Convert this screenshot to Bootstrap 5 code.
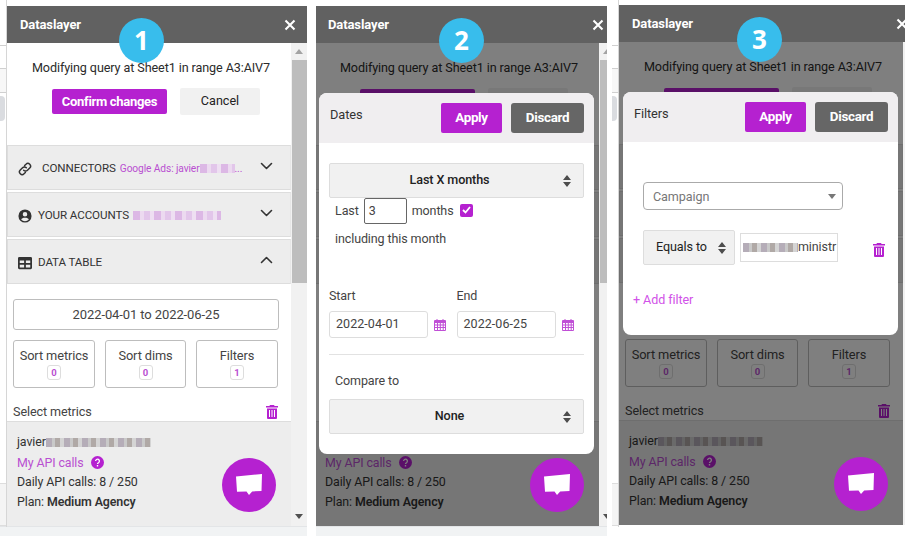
<!doctype html>
<html lang="en">
<head>
<meta charset="utf-8">
<title>Dataslayer</title>
<link href="https://cdn.jsdelivr.net/npm/bootstrap@5.3.0/dist/css/bootstrap.min.css" rel="stylesheet">
<style>
html,body{height:536px;overflow:hidden;background:#fff}
body{font-family:Roboto,"Liberation Sans",sans-serif;font-size:12.4px;color:#3c3c3c;letter-spacing:-.1px}
.stage{padding-top:6px;padding-left:7px;width:905px;height:536px;overflow:hidden;position:relative;gap:9px}
.under-bar{position:absolute;top:526px;height:10px;background:#f1f3f4;border-top:1px solid #e3e5e7}
.sheet-strip{position:absolute;top:0;height:527px;width:7px;border-right:1px solid #d6d6d6}
.sheet-strip i{position:absolute;left:0;right:0;display:block}
.strip-a{top:45px;height:24px;border-top:1px solid #d0d0d0;border-bottom:1px solid #d0d0d0}
.strip-b{top:69px;height:24px;background:#f7f7f7;border-bottom:1px solid #d0d0d0}
.strip-pill{top:96px;height:25px;background:#dadce0;border-radius:0 4px 4px 0;right:1px!important}
.strip-c{top:483px;height:43px;background:#f4f4f4;border-top:1px solid #ddd;border-bottom:1px solid #ddd}
.win{position:relative;height:520px;overflow:hidden;flex:none;z-index:1}
.w1{width:300px}
.w2{width:291px}
.w3{width:286px;margin-left:3px;margin-top:-1px}
.inner{width:300px}
.w2 .inner{margin-left:-1px}
.topbar{height:37px;background:#616161;color:#fff;font-weight:700;font-size:13px;padding:0 11px 0 13px;position:relative;z-index:3}
.xicon{width:12px;height:12px;flex:none}
.main{height:483px}
.content{width:284px;position:relative;overflow:hidden;flex:none}
.scrollzone{height:378px;overflow:hidden;background:#fff}
.scrollrail{width:16px;background:#f1f1f1;flex:none;position:relative}
.rail-up,.rail-down{position:absolute;left:4px;width:0;height:0;border-left:4px solid transparent;border-right:4px solid transparent}
.rail-up{top:6px;border-bottom:5px solid #a3a3a3}
.rail-down{bottom:7px;border-top:5px solid #505050}
.thumb{position:absolute;left:1px;right:0;top:17px;height:223px;background:#bdbdbd}
.msg{padding-top:17px;font-size:12.6px;color:#2b2b2b;height:102px}
.msg p{margin:0 0 12px;line-height:16px;padding-left:4px}
.btn-violet{background:#b521d0;color:#fff;border:0;border-radius:2px;font-weight:700;font-size:13px;padding:0;letter-spacing:-.3px}
.btn-cancel{background:#f1f1f1;color:#222;border:0;border-radius:2px;font-size:12.6px;padding:0;font-weight:400}
.confirm{width:115px;height:25px;margin-right:13px;margin-left:14px}
.cancelb{width:80px;height:27px}
.acc-item{height:45px;margin-bottom:2px;background:#ededed;border:1px solid #ddd;border-right-color:#e6e6e6;padding:3px 17px 0 10px;color:#333;font-size:11.6px;white-space:nowrap}
.acc-item svg.ico{width:14px;height:14px;flex:none;margin-right:6px}
.acc-sub{color:#b94fd1;font-size:10.2px;margin-left:4px}
.chev{margin-left:auto;width:13px;height:8px;flex:none;margin-top:-6px}
.mosaic{display:inline-block;height:9px;vertical-align:-1px;flex:none}
.mos-a{background:repeating-linear-gradient(90deg,#dcb8e5 0 7px,#ecdaf0 7px 11px,#e2c6ea 11px 17px,#eedff2 17px 21px)}
.mos-b{background:repeating-linear-gradient(90deg,#b5adb8 0 6px,#c9c9c9 6px 9px,#b0a9a6 9px 14px,#d4d4d4 14px 18px)}
.pad-table{padding:13px 12px 0 6px;color:#444}
.datebox{height:31px;border:1px solid #bdbdbd;border-radius:3px;font-size:13px;margin-bottom:10px;width:266px}
.sortrow{gap:10px;margin-bottom:16px}
.sortbox{height:48px;border:1px solid #bdbdbd;border-radius:3px;font-size:12.8px;padding-top:7px;line-height:15px;width:82px}
.sortbox:nth-child(2){width:81px}
.sortbox:nth-child(3){width:82px}
.count{display:block;width:14px;height:15px;margin:2px auto 0;border:1px solid #ddd;border-radius:3px;color:#b94fd1;font-size:9.5px;line-height:13px;font-weight:700}
.selmet{font-size:12.6px;padding-right:1px;height:16px}
.trash{width:12px;height:14px;fill:#b521d0;flex:none}
.footer-box{height:105px;background:#ededed;padding:10px 10px;border-top:1px solid #ddd;font-size:12.4px;color:#333}
.footer-box>div{height:20px;line-height:20px}
.footer-box>div.apilink{height:20px;line-height:22px}
.apilink{color:#b94fd1}
.qmark{width:13px;height:13px;margin-left:7px;vertical-align:-2px}
.dim{position:absolute;inset:0;background:rgba(0,0,0,.5);z-index:1}
.chat-fab{position:absolute;left:215px;top:415px;width:54px;height:54px;border-radius:50%;background:#b521d0;z-index:2}
.stepper{position:absolute;top:12px;width:45px;height:45px;border-radius:50%;background:#38bdec;color:#fff;font-weight:700;font-size:26px;z-index:4;font-family:"Open Sans",sans-serif}
.dlg{position:absolute;width:275px;background:#fff;border-radius:8px;z-index:2;overflow:hidden;font-size:12.5px;color:#444}
.dlg-head{height:50px;background:#f0eef0;padding:0 10px 0 11px;color:#333}
.dlg-title{padding-bottom:6px;margin-right:auto;font-size:12.8px}
.dlg .btn-violet,.dlg .btn-grey{height:30px;font-size:13.4px;font-weight:700}
.apply{width:61px;margin-right:9px}
.btn-grey{width:73px;background:#666;color:#fff;border:0;border-radius:3px;padding:0;letter-spacing:-.3px}
.fake-select{background:#f1f1f1;border:1px solid #ddd;border-radius:2px;height:35px;position:relative;font-weight:500;color:#222;font-size:12.6px;padding-right:14px}
.updown{position:absolute;right:12px;top:50%;margin-top:-7px;width:8px;height:14px}
.dlg-dates{padding:20px 10px 20px}
.lastrow{padding-left:6px;height:26px;margin-bottom:0;white-space:nowrap}
.numbox{width:43px;height:26px;border:1px solid #666;border-radius:2px;padding:0 4px;margin:0 5px;line-height:24px}
.tick{width:13px;height:13px;border-radius:2px;background:#b521d0;margin-left:6px;margin-top:-2px}
.incl{padding-left:6px;margin-top:6px;line-height:18px;height:58px}
.col-date{width:128px}
.lbl-date{line-height:16px;margin-bottom:7px;height:16px}
.dinput{width:99px;height:27px;border:1px solid #ddd;border-radius:3px;padding-left:6px;letter-spacing:.05px;color:#444}
.cal{width:12px;height:12px;margin-left:6px;flex:none}
.rule{border-top:1px solid #e2e2e2;margin:16px 0 17px}
.cmp-l{padding-left:6px;height:18px;line-height:18px;margin-bottom:9px}
.filters{padding:40px 10px 0}
.camp{width:200px;height:28px;border:1px solid #aaa;border-radius:4px;margin-left:10px;padding:2px 9px 0;color:#777;font-size:12.6px;margin-bottom:20px;position:relative}
.caret-d{position:absolute;right:6px;top:11px;width:0;height:0;border-left:4px solid transparent;border-right:4px solid transparent;border-top:5px solid #777}
.flt-row{margin-left:10px;height:35px}
.eqsel{width:92px;height:35px;background:#f1f1f1;border:1px solid #ddd;border-radius:2px;position:relative;padding-left:12px;color:#222;font-size:12.6px;flex:none;font-weight:400}
.eqsel .updown{right:8px}
.eqval{width:98px;height:29px;border:1px solid #ddd;margin-left:5px;padding-left:2px;overflow:hidden;white-space:nowrap;flex:none;color:#444}
.addf{color:#d152e8;padding-top:27px;font-size:12.6px;padding-bottom:27px;line-height:16px}
.flt-trash{margin-left:35px;margin-top:4px}
</style>
</head>
<body>
<svg width="0" height="0" class="position-absolute">
  <symbol id="i-x" viewBox="0 0 12 12"><path d="M1.500 1.500l9 9M10.500 1.500l-9 9" fill="none" stroke="#fff" stroke-width="2.100"/></symbol>
  <symbol id="i-link" viewBox="0 0 16 16"><path d="M6.500 9.500a3 3 0 0 0 4.300 0l2.600-2.600a3 3 0 0 0-4.300-4.300L7.600 4M9.500 6.500a3 3 0 0 0-4.300 0L2.600 9.100a3 3 0 0 0 4.300 4.300L8.400 12" fill="none" stroke="#333" stroke-width="1.700" stroke-linecap="round"/></symbol>
  <symbol id="i-user" viewBox="0 0 16 16"><path fill="#333" fill-rule="evenodd" d="M8 .5a7.500 7.500 0 1 0 0 15 7.500 7.500 0 0 0 0-15zm0 3a2.600 2.600 0 1 1 0 5.200 2.600 2.600 0 0 1 0-5.200zM8 14a6 6 0 0 1-4.400-2c.6-1.300 2.100-2 4.400-2s3.800.7 4.400 2A6 6 0 0 1 8 14z"/></symbol>
  <symbol id="i-table" viewBox="0 0 16 14"><path fill="#333" fill-rule="evenodd" d="M1.500 0h13A1.500 1.500 0 0 1 16 1.500v11a1.500 1.500 0 0 1-1.500 1.500h-13A1.500 1.500 0 0 1 0 12.500v-11A1.500 1.500 0 0 1 1.500 0zM2 4v3h5V4zm7 0v3h5V4zM2 9v3h5V9zm7 0v3h5V9z"/></symbol>
  <symbol id="i-down" viewBox="0 0 13 8"><path d="M1.500 1.500 6.500 6.500l5-5" fill="none" stroke="#333" stroke-width="1.600" stroke-linecap="round" stroke-linejoin="round"/></symbol>
  <symbol id="i-up" viewBox="0 0 13 8"><path d="M1.500 6.500 6.500 1.500l5 5" fill="none" stroke="#333" stroke-width="1.600" stroke-linecap="round" stroke-linejoin="round"/></symbol>
  <symbol id="i-trash" viewBox="0 0 12 14"><path fill-rule="evenodd" d="M4 0h4l.6 1H12v1.500H0V1h3.400zM1 3.500h10V13a1 1 0 0 1-1 1H2a1 1 0 0 1-1-1zM3 5v7h1V5zm2.500 0v7h1V5zM8 5v7h1V5z"/></symbol>
  <symbol id="i-cal" viewBox="0 0 12 12"><path fill="#c04fd6" fill-rule="evenodd" d="M2.500 0h1v1h5V0h1v1H11a1 1 0 0 1 1 1v9a1 1 0 0 1-1 1H1a1 1 0 0 1-1-1V2a1 1 0 0 1 1-1h1.500zM1 4v1.500h2V4zm3 0v1.500h1.800V4zm2.800 0v1.500H8.700V4zm2.900 0v1.500H11V4zM1 6.500V8h2V6.500zm3 0V8h1.800V6.500zm2.800 0V8h1.900V6.500zm2.900 0V8H11V6.500zM1 9v2h2V9zm3 0v2h1.800V9zm2.800 0v2h1.900V9zm2.900 0v2H11V9z"/></symbol>
  <symbol id="i-q" viewBox="0 0 13 13"><circle cx="6.500" cy="6.500" r="6.500" fill="#b521d0"/><path d="M4.600 5.100a1.900 1.900 0 1 1 2.900 1.600c-.7.4-1 .7-1 1.300" fill="none" stroke="#fff" stroke-width="1.300"/><rect x="5.800" y="9" width="1.400" height="1.500" fill="#fff"/></symbol>
  <symbol id="i-chat" viewBox="0 0 26 22"><path fill="#fff" d="M0 2.500 26 0l-.5 17-9.300.4L13 21l-2.500-3.500-9.500.2z"/></symbol>
  <symbol id="i-ud" viewBox="0 0 8 14"><path fill="#4d4d4d" d="M4 1 8 6H0zM4 13 0 8h8z"/></symbol>
</svg>

<div class="stage d-flex align-items-start">
  <div class="under-bar" style="left:0;width:307px"></div>
  <div class="under-bar" style="left:316px;width:291px"></div>
  <div class="sheet-strip" style="left:0"><i class="strip-a"></i><i class="strip-b"></i><i class="strip-pill"></i><i class="strip-c"></i></div>
  <div class="sheet-strip" style="left:612px"><i class="strip-a"></i><i class="strip-b"></i><i class="strip-pill"></i><i class="strip-c"></i></div>

  <!-- window 1 -->
  <div class="win w1">
    <div class="inner">
      <div class="topbar d-flex align-items-center justify-content-between"><span>Dataslayer</span><svg class="xicon"><use href="#i-x"/></svg></div>
      <div class="main d-flex">
        <div class="content">
          <div class="scrollzone">
            <div class="msg text-center"><p>Modifying query at Sheet1 in range A3:AIV7</p><div class="d-flex justify-content-center align-items-center"><button class="btn-violet confirm">Confirm changes</button><button class="btn-cancel cancelb">Cancel</button></div></div>
            <div class="acc-item d-flex align-items-center"><svg class="ico"><use href="#i-link"/></svg><span class="ms-1">CONNECTORS</span><span class="acc-sub">Google Ads: javier<span class="mosaic mos-a" style="width:35px"></span>...</span><svg class="chev"><use href="#i-down"/></svg></div>
            <div class="acc-item d-flex align-items-center"><svg class="ico"><use href="#i-user"/></svg><span>YOUR ACCOUNTS</span><span class="acc-sub"><span class="mosaic mos-a" style="width:88px"></span></span><svg class="chev"><use href="#i-down"/></svg></div>
            <div class="acc-item d-flex align-items-center"><svg class="ico"><use href="#i-table"/></svg><span>DATA TABLE</span><svg class="chev"><use href="#i-up"/></svg></div>
            <div class="pad-table">
              <div class="datebox d-flex align-items-center justify-content-center">2022-04-01 to 2022-06-25</div>
              <div class="sortrow d-flex text-center">
                <div class="sortbox">Sort metrics<span class="count">0</span></div>
                <div class="sortbox">Sort dims<span class="count">0</span></div>
                <div class="sortbox">Filters<span class="count">1</span></div>
              </div>
              <div class="selmet d-flex justify-content-between align-items-center"><span>Select metrics</span><svg class="trash"><use href="#i-trash"/></svg></div>
            </div>
          </div>
          <div class="footer-box">
            <div>javier<span class="mosaic mos-b" style="width:105px"></span></div>
            <div class="apilink">My API calls<svg class="qmark"><use href="#i-q"/></svg></div>
            <div>Daily API calls: 8 / 250</div>
            <div>Plan: <strong class="fw-semibold">Medium Agency</strong></div>
          </div>
          <div class="chat-fab d-flex align-items-center justify-content-center"><svg width="26" height="22"><use href="#i-chat"/></svg></div>
        </div>
        <div class="scrollrail"><span class="rail-up"></span><span class="thumb"></span><span class="rail-down"></span></div>
      </div>
    </div>
    <div class="stepper d-flex align-items-center justify-content-center" style="left:112px">1</div>
  </div>

  <!-- window 2 -->
  <div class="win w2">
    <div class="inner">
      <div class="topbar d-flex align-items-center justify-content-between"><span>Dataslayer</span><svg class="xicon"><use href="#i-x"/></svg></div>
      <div class="main d-flex">
        <div class="content">
          <div class="scrollzone">
            <div class="msg text-center"><p>Modifying query at Sheet1 in range A3:AIV7</p><div class="d-flex justify-content-center align-items-center"><button class="btn-violet confirm">Confirm changes</button><button class="btn-cancel cancelb">Cancel</button></div></div>
            <div class="acc-item d-flex align-items-center"></div>
            <div class="acc-item d-flex align-items-center"></div>
            <div class="acc-item d-flex align-items-center"></div>
          </div>
          <div class="footer-box">
            <div>javier<span class="mosaic mos-b" style="width:105px"></span></div>
            <div class="apilink">My API calls<svg class="qmark"><use href="#i-q"/></svg></div>
            <div>Daily API calls: 8 / 250</div>
            <div>Plan: <strong class="fw-semibold">Medium Agency</strong></div>
          </div>
          <div class="dim"></div>
          <div class="dlg" style="left:4px;top:50px">
            <div class="dlg-head d-flex align-items-center"><span class="dlg-title">Dates</span><button class="btn-violet apply">Apply</button><button class="btn-grey">Discard</button></div>
            <div class="dlg-dates">
              <div class="fake-select d-flex align-items-center justify-content-center">Last X months<svg class="updown"><use href="#i-ud"/></svg></div>
              <div class="lastrow d-flex align-items-center">Last<span class="numbox">3</span>months<span class="tick d-flex align-items-center justify-content-center"><svg width="9" height="8" viewBox="0 0 9 8"><path d="M1 4l2.500 2.500L8 1" fill="none" stroke="#fff" stroke-width="1.800"/></svg></span></div>
              <div class="incl">including this month</div>
              <div class="d-flex">
                <div class="col-date"><div class="lbl-date">Start</div><div class="d-flex align-items-center"><div class="dinput d-flex align-items-center">2022-04-01</div><svg class="cal"><use href="#i-cal"/></svg></div></div>
                <div class="col-date"><div class="lbl-date">End</div><div class="d-flex align-items-center"><div class="dinput d-flex align-items-center">2022-06-25</div><svg class="cal"><use href="#i-cal"/></svg></div></div>
              </div>
              <div class="rule"></div>
              <div class="cmp-l">Compare to</div>
              <div class="fake-select d-flex align-items-center justify-content-center">None<svg class="updown"><use href="#i-ud"/></svg></div>
            </div>
          </div>
          <div class="chat-fab d-flex align-items-center justify-content-center"><svg width="26" height="22"><use href="#i-chat"/></svg></div>
        </div>
        <div class="scrollrail"><span class="rail-up"></span><span class="thumb"></span><span class="rail-down"></span></div>
      </div>
    </div>
    <div class="stepper d-flex align-items-center justify-content-center" style="left:123px">2</div>
  </div>

  <!-- window 3 -->
  <div class="win w3">
    <div class="inner">
      <div class="topbar d-flex align-items-center justify-content-between"><span>Dataslayer</span><svg class="xicon"><use href="#i-x"/></svg></div>
      <div class="main d-flex">
        <div class="content">
          <div class="scrollzone">
            <div class="msg text-center"><p>Modifying query at Sheet1 in range A3:AIV7</p><div class="d-flex justify-content-center align-items-center"><button class="btn-violet confirm">Confirm changes</button><button class="btn-cancel cancelb">Cancel</button></div></div>
            <div class="acc-item d-flex align-items-center"></div>
            <div class="acc-item d-flex align-items-center"></div>
            <div class="acc-item d-flex align-items-center"></div>
            <div class="pad-table">
              <div class="datebox d-flex align-items-center justify-content-center">2022-04-01 to 2022-06-25</div>
              <div class="sortrow d-flex text-center">
                <div class="sortbox">Sort metrics<span class="count">0</span></div>
                <div class="sortbox">Sort dims<span class="count">0</span></div>
                <div class="sortbox">Filters<span class="count">1</span></div>
              </div>
              <div class="selmet d-flex justify-content-between align-items-center"><span>Select metrics</span><svg class="trash"><use href="#i-trash"/></svg></div>
            </div>
          </div>
          <div class="footer-box">
            <div>javier<span class="mosaic mos-b" style="width:105px"></span></div>
            <div class="apilink">My API calls<svg class="qmark"><use href="#i-q"/></svg></div>
            <div>Daily API calls: 8 / 250</div>
            <div>Plan: <strong class="fw-semibold">Medium Agency</strong></div>
          </div>
          <div class="dim"></div>
          <div class="dlg" style="left:4px;top:50px">
            <div class="dlg-head d-flex align-items-center"><span class="dlg-title">Filters</span><button class="btn-violet apply">Apply</button><button class="btn-grey">Discard</button></div>
            <div class="filters">
              <div class="camp d-flex align-items-center">Campaign<span class="caret-d"></span></div>
              <div class="flt-row d-flex align-items-center">
                <div class="eqsel d-flex align-items-center">Equals to<svg class="updown"><use href="#i-ud"/></svg></div>
                <div class="eqval d-flex align-items-center"><span class="mosaic mos-b" style="width:55px"></span>ministr</div>
                <svg class="trash flt-trash"><use href="#i-trash"/></svg>
              </div>
              <div class="addf">+ Add filter</div>
            </div>
          </div>
          <div class="chat-fab d-flex align-items-center justify-content-center"><svg width="26" height="22"><use href="#i-chat"/></svg></div>
        </div>
        <div class="scrollrail"></div>
      </div>
    </div>
    <div class="stepper d-flex align-items-center justify-content-center" style="left:118px">3</div>
  </div>
</div>
</body>
</html>
